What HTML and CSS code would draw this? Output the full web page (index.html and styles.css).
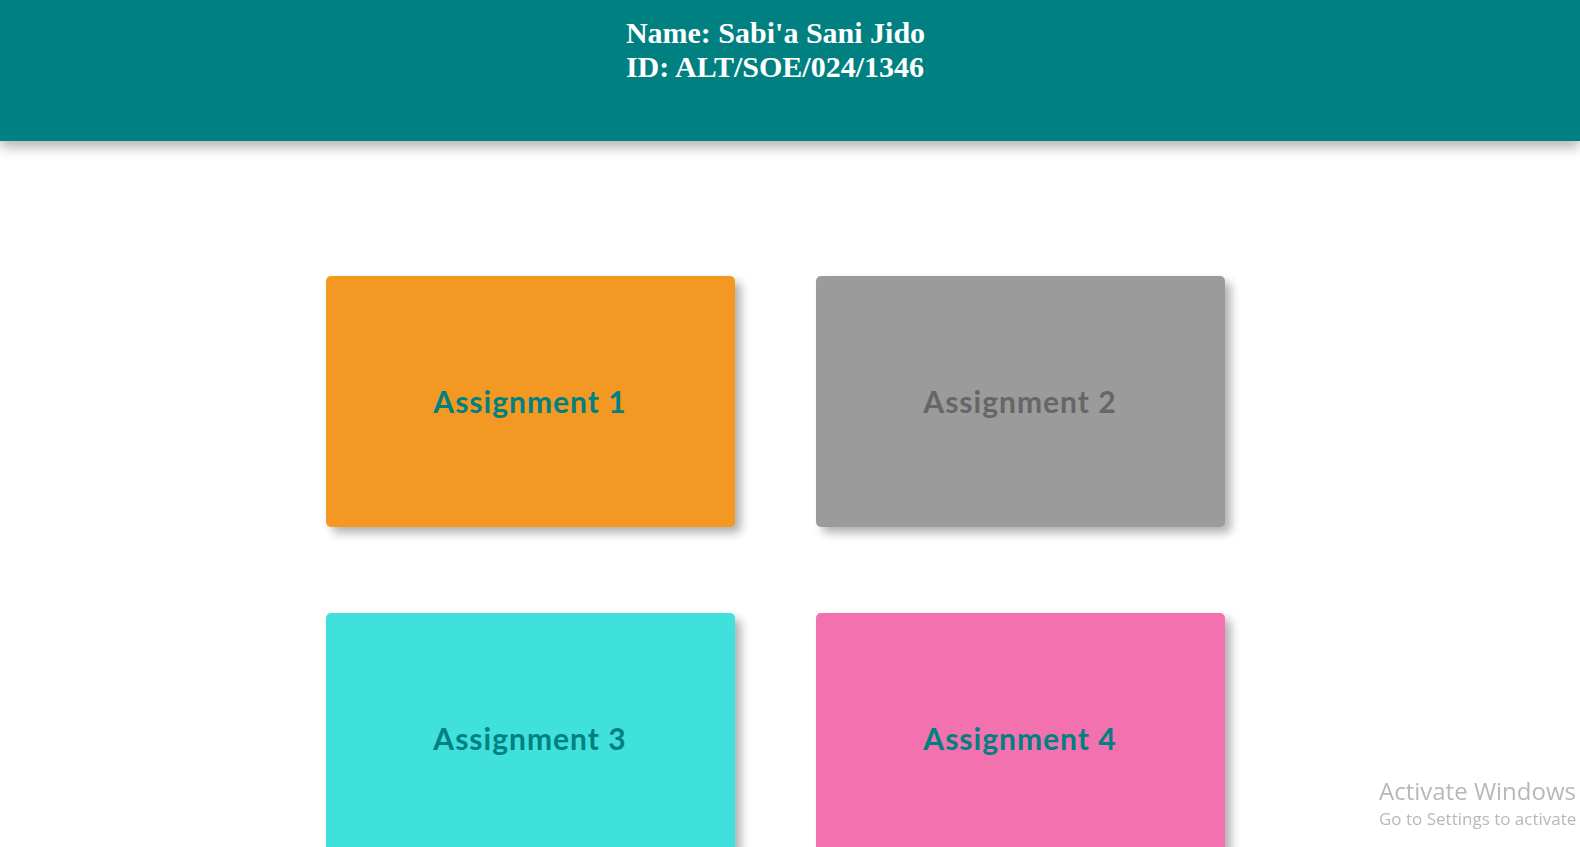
FILE: index.html
```html
<!DOCTYPE html>
<html lang="en">
<head>
<meta charset="utf-8">
<title>Assignments</title>
<link rel="stylesheet" href="styles.css">
</head>
<body>
<header class="site-header">
  <div class="student">
    <div class="student-line">Name: Sabi'a Sani Jido</div>
    <div class="student-line">ID: ALT/SOE/024/1346</div>
  </div>
</header>
<main class="grid">
  <a class="card card-orange" href="#">Assignment 1</a>
  <a class="card card-gray" href="#">Assignment 2</a>
  <a class="card card-turq" href="#">Assignment 3</a>
  <a class="card card-pink" href="#">Assignment 4</a>
</main>
<div class="activate">
  <div class="activate-title">Activate Windows</div>
  <div class="activate-sub">Go to Settings to activate</div>
</div>
</body>
</html>
```

FILE: styles.css
```css
html, body {
  margin: 0;
  padding: 0;
  background: #ffffff;
  overflow: hidden;
}
body {
  height: 847px;
}
.site-header {
  height: 141px;
  background: #008080;
  box-shadow: 0 6px 12px rgba(0, 0, 0, 0.3);
  display: flex;
  justify-content: center;
  padding-right: 30px;
  box-sizing: border-box;
  position: relative;
  z-index: 1;
}
.student {
  padding-top: 16px;
  padding-left: 1px;
  font-family: "Liberation Serif", "Times New Roman", serif;
  font-weight: bold;
  font-size: 30px;
  line-height: 34px;
  color: #ffffff;
}
.grid {
  display: grid;
  grid-template-columns: 409px 409px;
  column-gap: 81px;
  row-gap: 86px;
  justify-content: center;
  padding-top: 135px;
  padding-right: 30px;
}
.card {
  height: 251px;
  border-radius: 5px;
  display: flex;
  align-items: center;
  justify-content: center;
  padding-bottom: 2px;
  box-sizing: border-box;
  text-decoration: none;
  font-family: Lato, "Open Sans", sans-serif;
  font-weight: bold;
  font-size: 30px;
  letter-spacing: 1px;
  color: #008080;
  box-shadow: 6px 6px 10px rgba(0, 0, 0, 0.3);
}
.card-orange { background: #f39823; }
.card-gray { background: #9b9b9b; color: #666666; }
.card-turq { background: #40e0dc; }
.card-pink { background: #f271ae; }
.activate {
  position: fixed;
  left: 1379px;
  top: 776px;
  white-space: nowrap;
  font-family: "Open Sans", "Noto Sans", sans-serif;
  color: #b8b8b8;
}
.activate-title {
  font-size: 24px;
  line-height: 30px;
}
.activate-sub {
  font-size: 17px;
  line-height: 26px;
}
```
